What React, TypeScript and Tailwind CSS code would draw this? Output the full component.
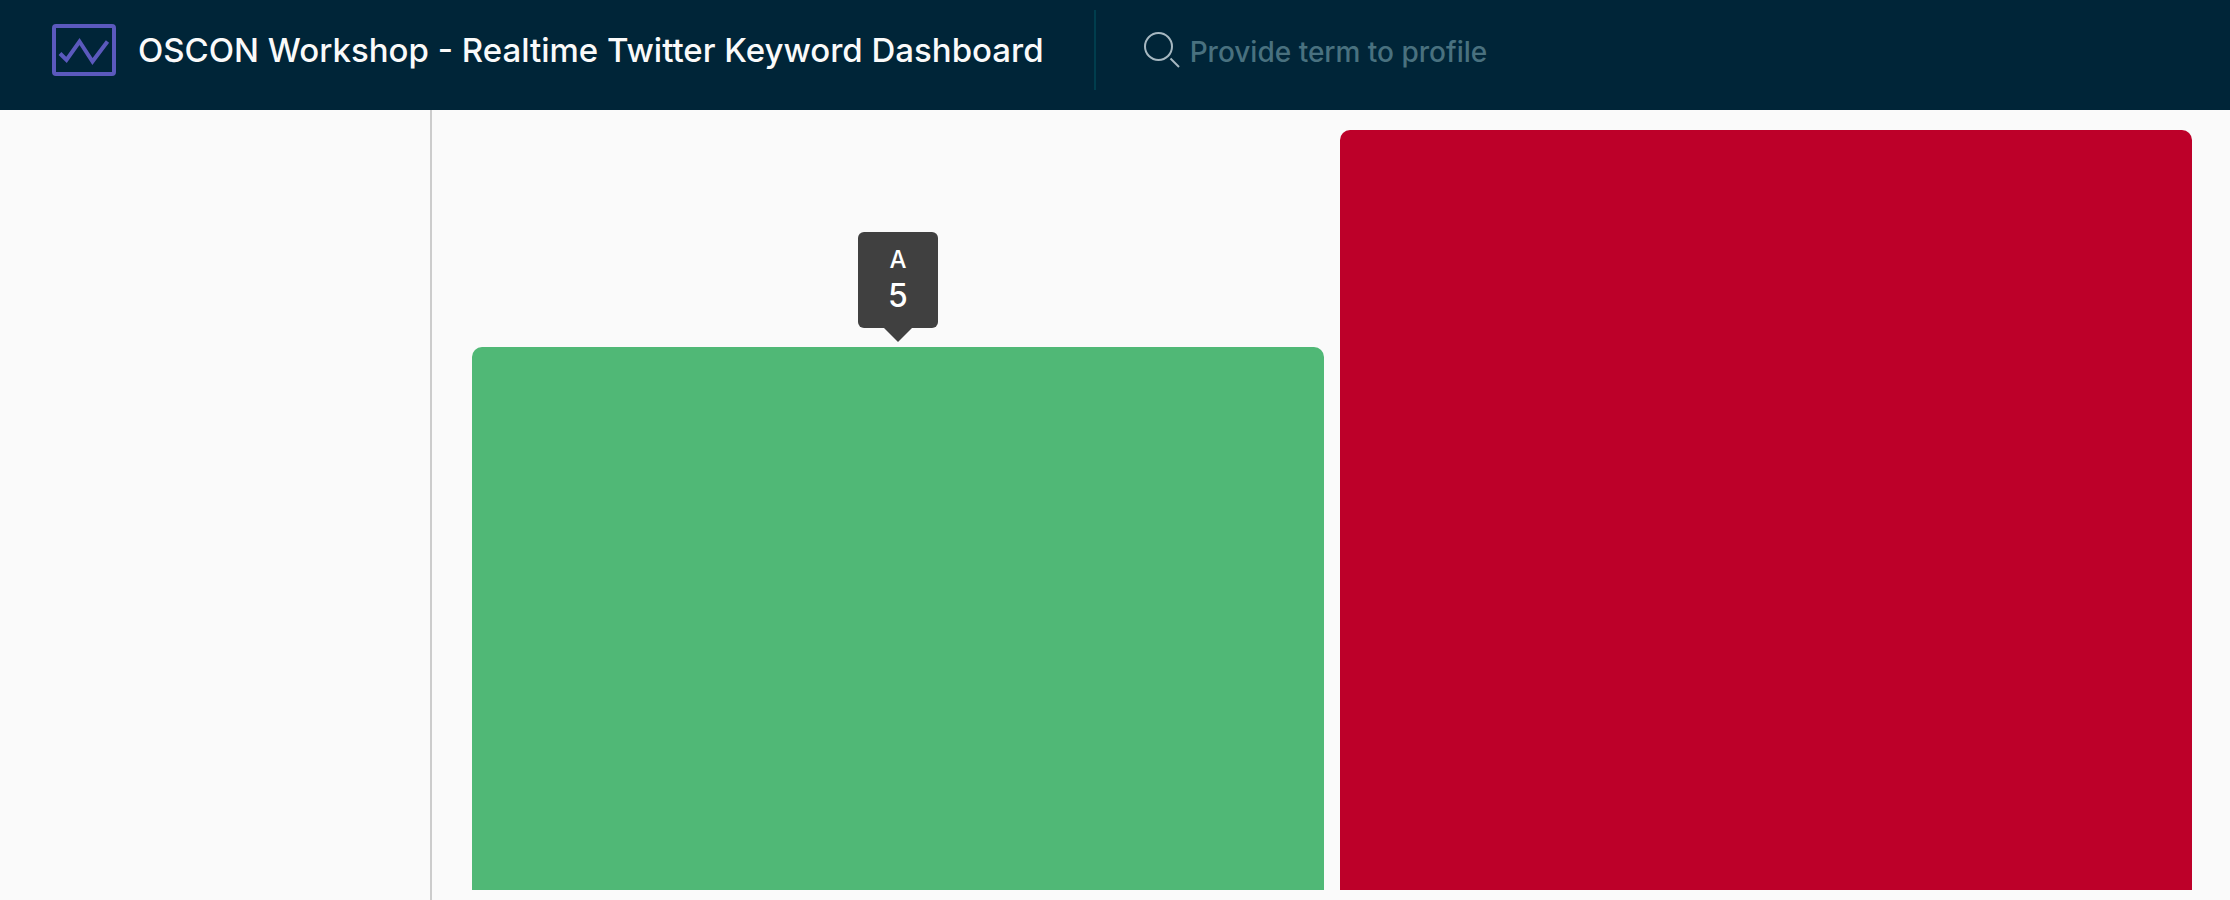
const bars = [
  { label: "A", value: 5, color: "bg-[#50b876]", active: true },
  { label: "B", value: 7, color: "bg-[#bd0029]", active: false },
];

const highest = Math.max(...bars.map((bar) => bar.value));

function Logo() {
  return (
    <svg className="h-[52px] w-16 shrink-0" viewBox="0 0 64 52" fill="none" stroke="#5b59bd" strokeWidth="4" aria-hidden="true">
      <rect x="2" y="2" width="60" height="48" rx="2" />
      <path d="M8 29.5 L14.5 36 L27.5 17.5 L40.5 37.5 L55.5 17.5" />
    </svg>
  );
}

function SearchIcon() {
  return (
    <svg className="h-9 w-9 shrink-0" viewBox="0 0 36 36" fill="none" stroke="#a6b8c1" strokeWidth="2" aria-hidden="true">
      <circle cx="14.5" cy="14.5" r="13.5" />
      <path d="M26.5 26.5 L35 35" />
    </svg>
  );
}

function Tooltip({ label, value }: { label: string; value: number }) {
  return (
    <div
      role="tooltip"
      className="absolute bottom-full left-1/2 mb-[19px] flex h-24 w-20 -translate-x-1/2 flex-col items-center justify-center rounded-md bg-[#404040] text-white"
    >
      <span className="text-2xl leading-8 font-medium">{label}</span>
      <span className="text-[32px] leading-10 font-medium">{value}</span>
      <svg className="absolute top-full left-1/2 h-3.5 w-7 -translate-x-1/2" viewBox="0 0 28 14" aria-hidden="true">
        <path d="M0 0 H28 L14 14 Z" fill="#404040" />
      </svg>
    </div>
  );
}

export default function App() {
  return (
    <div className="flex min-h-screen flex-col bg-[#fafafa] font-['Inter',sans-serif]">
      <header className="flex h-[110px] items-start bg-[#002538] pt-2.5 pl-[52px]">
        <div className="flex h-20 items-center gap-[22px] border-r-2 border-[#003d4d] pr-[50px]">
          <Logo />
          <h1 className="text-[33px] leading-10 font-medium whitespace-nowrap text-[#fafafa]">
            OSCON Workshop - Realtime Twitter Keyword Dashboard
          </h1>
        </div>
        <label className="flex h-20 flex-1 items-center gap-2.5 pl-12">
          <SearchIcon />
          <input
            type="text"
            aria-label="Search term"
            placeholder="Provide term to profile"
            className="mt-1 h-10 w-full max-w-[480px] bg-transparent text-[28px] font-medium text-[#fafafa] outline-none placeholder:text-[#49717f]"
          />
        </label>
      </header>
      <div className="flex flex-1">
        <aside className="w-[432px] shrink-0 border-r-2 border-[#cccccc]" />
        <main className="flex flex-1 items-stretch gap-4 pt-5 pr-[38px] pb-2.5 pl-10">
          {bars.map((bar) => (
            <div key={bar.label} className="flex flex-1 flex-col justify-end">
              <div
                className={`relative rounded-t-[10px] ${bar.color}`}
                style={{ height: `${(bar.value / highest) * 100}%` }}
              >
                {bar.active && <Tooltip label={bar.label} value={bar.value} />}
              </div>
            </div>
          ))}
        </main>
      </div>
    </div>
  );
}
